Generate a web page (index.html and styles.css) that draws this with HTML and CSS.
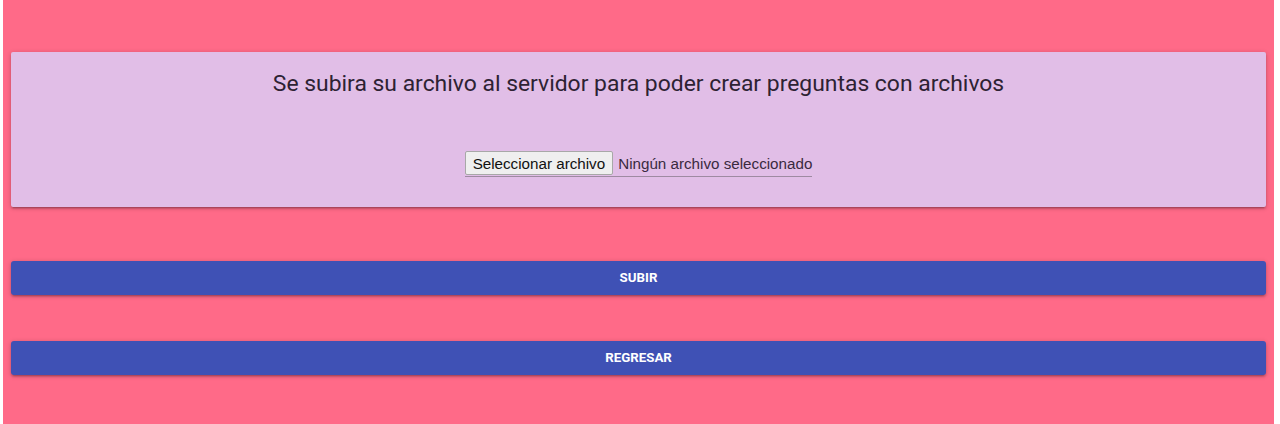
FILE: index.html
```html
<!DOCTYPE html>
<html lang="es">
<head>
<meta charset="utf-8">
<title>Subir archivo</title>
<link rel="stylesheet" href="styles.css">
</head>
<body>
<main class="page">
  <section class="card">
    <h5 class="card-title">Se subira su archivo al servidor para poder crear preguntas con archivos</h5>
    <div class="file-row">
      <label class="file-field">
        <span class="file-btn">Seleccionar archivo</span>
        <span class="file-name">Ningún archivo seleccionado</span>
      </label>
    </div>
  </section>
  <button class="btn btn-first" type="button">SUBIR</button>
  <button class="btn btn-second" type="button">REGRESAR</button>
</main>
</body>
</html>
```

FILE: styles.css
```css
html, body {
  margin: 0;
  padding: 0;
  background: #ffffff;
}
.page {
  box-sizing: border-box;
  margin: 0 6px 0 3px;
  height: 424px;
  background: #ff6a88;
  padding: 52px 8px 0 8px;
  display: flex;
  flex-direction: column;
  font-family: Roboto, "Liberation Sans", sans-serif;
}
.card {
  box-sizing: border-box;
  height: 155px;
  background: #e1bee7;
  border-radius: 2px;
  box-shadow: 0 2px 2px 0 rgba(0,0,0,0.14), 0 3px 1px -2px rgba(0,0,0,0.12), 0 1px 5px 0 rgba(0,0,0,0.2);
  padding: 18px 0 0 0;
  display: flex;
  flex-direction: column;
  align-items: center;
}
.card-title {
  margin: 0;
  font-size: 22.9px;
  font-weight: 400;
  line-height: 28px;
  color: #2d2233;
  text-align: center;
}
.file-row {
  margin-top: 53px;
  display: flex;
  justify-content: center;
}
.file-field {
  display: flex;
  align-items: center;
  border-bottom: 1px solid #9e8aa2;
  padding-bottom: 1px;
  font-family: "Liberation Sans", Arial, sans-serif;
  font-size: 15.2px;
}
.file-btn {
  box-sizing: border-box;
  height: 24px;
  padding: 0 7px;
  display: flex;
  align-items: center;
  background: #efefef;
  border: 1px solid #a8a8a8;
  border-radius: 2px;
  color: #111;
}
.file-name {
  margin-left: 5px;
  color: #3a2a40;
}
.btn {
  box-sizing: border-box;
  height: 34px;
  border: none;
  border-radius: 3px;
  background: #3f51b5;
  color: #ffffff;
  font-family: Roboto, "Liberation Sans", sans-serif;
  font-weight: 700;
  font-size: 13.3px;
  letter-spacing: 0;
  padding-bottom: 2px;
  box-shadow: 0 2px 2px 0 rgba(0,0,0,0.14), 0 3px 1px -2px rgba(0,0,0,0.12), 0 1px 5px 0 rgba(0,0,0,0.2);
  cursor: pointer;
}
.btn-first {
  margin-top: 54px;
}
.btn-second {
  margin-top: 46px;
}
```
